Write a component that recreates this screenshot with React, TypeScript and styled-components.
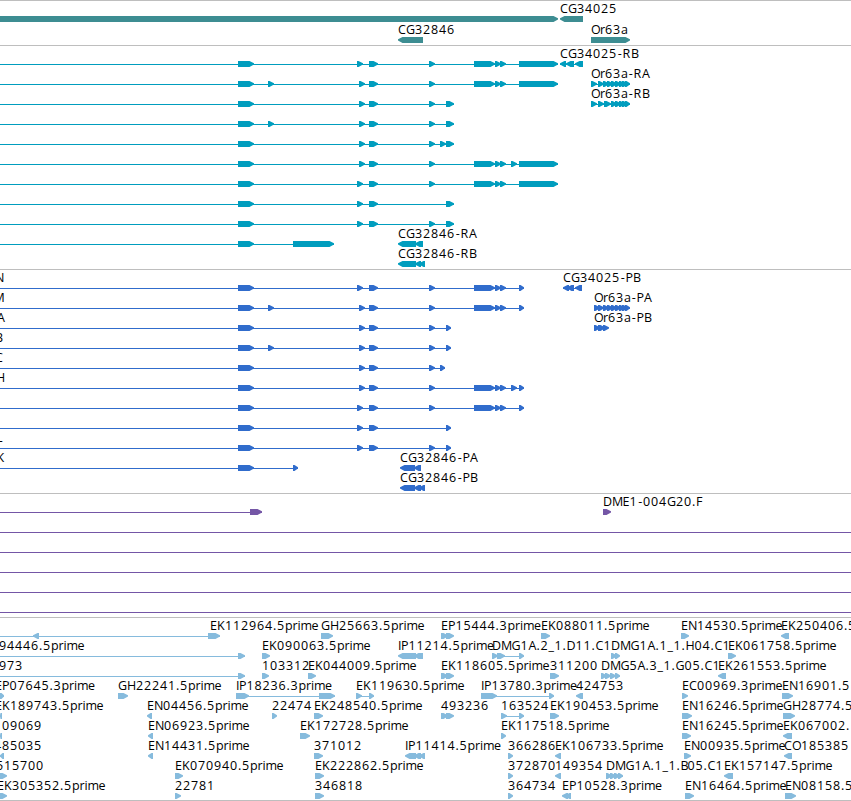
import React from "react";
import styled, { createGlobalStyle } from "styled-components";

const GlobalStyle = createGlobalStyle`
  body { margin: 0; background: #fff; overflow: hidden; }
`;

const Browser = styled.main`
  display: flex;
  flex-direction: column;
  width: 851px;
  height: 801px;
  overflow: hidden;
  background: #fff;
  border-bottom: 1px solid #bebebe;
  box-sizing: border-box;
`;

const Track = styled.section<{ $color: string; $gap: number }>`
  display: flex;
  flex-direction: column;
  flex: none;
  color: ${(p) => p.$color};
  border-top: 1px solid #bebebe;
  padding-bottom: ${(p) => p.$gap}px;
`;

const Lane = styled.svg<{ $height: number }>`
  display: block;
  flex: none;
  width: 851px;
  height: ${(p) => p.$height}px;
  overflow: visible;
`;

const Name = styled.text`
  font-family: "Open Sans", "Noto Sans", sans-serif;
  font-size: 12.5px;
  fill: #000;
  font-kerning: none;
  font-variant-ligatures: none;
  white-space: pre;
`;

const Intron = styled.rect`
  fill: currentColor;
`;

const Exon = styled.polygon`
  fill: currentColor;
`;

// Horizontal advance of each character, in pixels.
const ADVANCE: Record<string, number> = {
  C: 8, G: 9, E: 7, K: 8, P: 7.5, N: 9, H: 9, I: 3, D: 9, M: 10.5, O: 9, R: 8.5, A: 8, B: 7, F: 7, L: 6,
  ".": 4, "-": 5.5, "_": 6, p: 7.5, r: 5, i: 3, m: 11, e: 7, a: 7,
};

// Hyphens sit slightly right of their origin, centred between neighbours.
const advances = (text: string, start: number) => {
  let x = start;
  return text.split("").map((c) => {
    const here = c === "-" ? x + 0.7 : x;
    x += ADVANCE[c] ?? 8;
    return here;
  });
};

// One lane: names as [x, text], spans as "from-to" intron lines, and features
// as ">from-to" (forward) or "<from-to" (reverse).
type LaneData = { names?: [number, string][]; line?: string; parts?: string };

const parse = (s: string) => s.split("-").map(Number);

const shape = (code: string) => {
  const [a, b] = parse(code.slice(1));
  const tip = Math.min(6, b - a) - 1.5;
  return code[0] === ">"
    ? `${a},15 ${b - tip},15 ${b},17.2 ${b},18.6 ${b - tip},21 ${a},21`
    : `${b},15 ${a + tip},15 ${a},17.2 ${a},18.6 ${a + tip},21 ${b},21`;
};

const LaneView = ({ lane, height }: { lane: LaneData; height: number }) => (
  <Lane $height={height}>
    {(lane.line ? lane.line.split(" ") : []).map((s) => {
      const [a, b] = parse(s);
      return <Intron key={s} x={a} y={18} width={b - a} height={1} />;
    })}
    {(lane.parts ? lane.parts.split(" ") : []).map((s) => (
      <Exon key={s} points={shape(s)} />
    ))}
    {(lane.names ?? []).map(([x, text]) => (
      <Name key={text} x={advances(text, x).join(" ")} y={12}>
        {text}
      </Name>
    ))}
  </Lane>
);

const genes: LaneData[] = [
  { names: [[560, "CG34025"]], parts: ">0-558 <560-583" },
  { names: [[398, "CG32846"], [591, "Or63a"]], parts: "<398-423 >591-630" },
];

const tail = ">474-495 >495-501 >500-506";
const orfTail = ">598-604 >603-609 >607-613 >611-617 >615-621 >619-625 >622-628 >625-630";

const transcripts: LaneData[] = [
  { names: [[560, "CG34025-RB"]], line: "0-558 560-583", parts: `>238-254 >357-363 >369-378 >429-435 ${tail} >519-558 <560-566 <566-574 <575-583` },
  { names: [[591, "Or63a-RA"]], line: "0-558 591-630", parts: `>238-254 >268-274 >359-365 >369-378 >429-435 ${tail} >519-558 >591-597 ${orfTail}` },
  { names: [[591, "Or63a-RB"]], line: "0-454 591-630", parts: `>238-254 >359-365 >369-378 >429-435 >446-454 >591-597 >598-604 >604-611 >611-617 >615-621 >619-625 >622-628 >625-630` },
  { line: "0-454", parts: ">238-254 >268-274 >359-365 >369-378 >429-435 >446-454" },
  { line: "0-454", parts: ">238-254 >359-365 >369-378 >429-435 >440-446 >446-454" },
  { line: "0-558", parts: `>238-254 >359-365 >369-378 >429-435 ${tail} >511-517 >519-558` },
  { line: "0-558", parts: `>238-254 >357-363 >369-378 >429-435 ${tail} >519-558` },
  { line: "0-454", parts: ">238-254 >357-363 >369-378 >446-454" },
  { line: "0-454", parts: ">238-254 >357-363 >369-378 >429-435 >446-454" },
  { names: [[398, "CG32846-RA"]], line: "0-334", parts: ">238-254 >293-334 <398-416 <415-423" },
  { names: [[398, "CG32846-RB"]], parts: "<398-416 <415-421 <419-425" },
];

const proteins: LaneData[] = [
  { names: [[-5, "N"], [563, "CG34025-PB"]], line: "0-524 563-582", parts: `>238-254 >357-363 >369-378 >429-435 ${tail} >519-524 <563-569 <567-574 <575-582` },
  { names: [[-6.5, "M"], [594, "Or63a-PA"]], line: "0-524 594-630", parts: `>238-254 >268-274 >359-365 >369-378 >429-435 ${tail} >519-524 >594-600 ${orfTail}` },
  { names: [[-3, "A"], [594, "Or63a-PB"]], line: "0-451 594-608", parts: ">238-254 >359-365 >369-378 >429-435 >446-451 >594-600 >598-605 >603-609" },
  { names: [[-5, "B"]], line: "0-451", parts: ">238-254 >268-274 >359-365 >369-378 >429-435 >446-451" },
  { names: [[-5, "C"]], line: "0-445", parts: ">238-254 >359-365 >369-378 >429-435 >440-445" },
  { names: [[-4, "H"]], line: "0-524", parts: `>238-254 >359-365 >369-378 >429-435 ${tail} >511-517 >519-524` },
  { line: "0-524", parts: `>238-254 >357-363 >369-378 >429-435 ${tail} >519-524` },
  { line: "0-451", parts: ">238-254 >357-363 >369-378 >446-451" },
  { names: [[-4, "L"]], line: "0-451", parts: ">238-254 >357-363 >369-378 >429-435 >446-451" },
  { names: [[-3.5, "K"], [400, "CG32846-PA"]], line: "0-298", parts: ">238-254 >293-298 <400-415 <414-421" },
  { names: [[400, "CG32846-PB"]], parts: "<400-415 <414-421 <419-425" },
];

const clones: LaneData[] = [
  { names: [[603, "DME1-004G20.F"]], line: "0-262", parts: ">250-262 >603-611" },
  ...Array.from({ length: 5 }, () => ({ line: "0-851" })),
];

const ests: LaneData[] = [
  {
    names: [[210, "EK112964.5prime"], [321, "GH25663.5prime"], [441, "EP15444.3prime"], [541, "EK088011.5prime"], [681, "EN14530.5prime"], [781, "EK250406.5"]],
    line: "0-220",
    parts: "<33-39 >208-220 >321-333 >441-448 >446-454 >541-550 >681-689 <781-789",
  },
  {
    names: [[-1, "94446.5prime"], [262, "EK090063.5prime"], [398, "IP11214.5prime"], [492, "DMG1A.2_1.D11.C1"], [611, "DMG1A.1_1.H04.C1"], [728, "EK061758.5prime"]],
    line: "0-245 492-524",
    parts: ">238-245 >262-270 <398-416 <414-423 >492-498 >497-505 >519-524 >611-617 >615-620 >728-736",
  },
  {
    names: [[-1, "973"], [262, "103312"], [308, "EK044009.5prime"], [441, "EK118605.5prime"], [550, "311200"], [601, "DMG5A.3_1.G05.C1"], [718, "EK261553.5prime"]],
    line: "0-245 601-620",
    parts: ">238-245 >262-269 >308-316 >441-448 >446-454 >550-559 >601-607 >605-611 >610-616 >615-620 <718-726",
  },
  {
    names: [[-5, "EP07645.3prime"], [118, "GH22241.5prime"], [236, "IP18236.3prime"], [356, "EK119630.5prime"], [481, "IP13780.3prime"], [576, "424753"], [682, "EC00969.3prime"], [782, "EN16901.5"]],
    line: "236-335 356-374 481-554",
    parts: ">0-4 >118-128 >236-249 >319-335 >356-362 >369-374 >481-497 >549-554 <576-583 >682-688 >782-793",
  },
  {
    names: [[-5, "EK189743.5prime"], [147, "EN04456.5prime"], [272, "22474"], [314, "EK248540.5prime"], [441, "493236"], [501, "163524"], [550, "EK190453.5prime"], [682, "EN16246.5prime"], [783, "GH28774.5"]],
    line: "501-524",
    parts: "<0-2 <147-152 >272-277 >314-323 >441-448 >446-454 >501-507 >519-524 >550-559 >682-692 >783-795",
  },
  {
    names: [[-6, "109069"], [148, "EN06923.5prime"], [300, "EK172728.5prime"], [501, "EK117518.5prime"], [682, "EN16245.5prime"], [783, "EK067002."]],
    parts: "<0-2 <148-153 >300-310 >501-506 >682-691 <783-792",
  },
  {
    names: [[-6, "485035"], [148, "EN14431.5prime"], [314, "371012"], [405, "IP11414.5prime"], [508, "366286"], [555, "EK106733.5prime"], [684, "EN00935.5prime"], [784, "CO185385"]],
    parts: "<0-4 <148-153 >314-323 <405-416 <414-421 <419-425 >508-513 <555-561 >684-691 <784-792",
  },
  {
    names: [[-4, "515700"], [175, "EK070940.5prime"], [315, "EK222862.5prime"], [508, "372870"], [555, "149354"], [606, "DMG1A.1_1.B05.C1"], [724, "EK157147.5prime"]],
    line: "606-623",
    parts: ">0-7 >175-183 >315-324 >508-513 <555-561 >606-612 >610-616 >614-620 >618-623 <724-733",
  },
  {
    names: [[-3, "EK305352.5prime"], [175, "22781"], [315, "346818"], [508, "364734"], [562, "EP10528.3prime"], [685, "EN16464.5prime"], [785, "EN08158.5"]],
    parts: ">0-7 >175-181 >315-324 >508-513 <562-568 <565-571 >685-694 >785-796",
  },
];

const tracks = [
  { id: "genes", color: "#3d8d92", height: 21, gap: 2, lanes: genes },
  { id: "transcripts", color: "#009dbe", height: 20, gap: 3, lanes: transcripts },
  { id: "proteins", color: "#306ccc", height: 20, gap: 3, lanes: proteins },
  { id: "clones", color: "#7456a6", height: 20, gap: 3, lanes: clones },
  { id: "ests", color: "#86bbdd", height: 20, gap: 2, lanes: ests },
];

export default function App() {
  return (
    <>
      <GlobalStyle />
      <Browser>
        {tracks.map((t) => (
          <Track key={t.id} $color={t.color} $gap={t.gap}>
            {t.lanes.map((lane, i) => (
              <LaneView key={i} lane={lane} height={t.height} />
            ))}
          </Track>
        ))}
      </Browser>
    </>
  );
}
